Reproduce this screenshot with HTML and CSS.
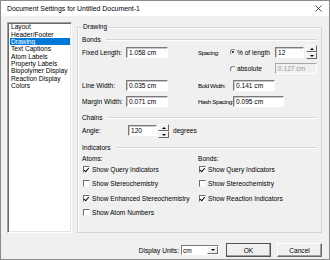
FILE: index.html
```html
<!DOCTYPE html>
<html lang="en">
<head>
  <meta charset="UTF-8" />
  <title>Document Settings</title>
  <link rel="stylesheet" href="styles.css">
</head>
<body>
  <div class="window">
    <div class="titlebar">
      <span>Document Settings for Untitled Document-1</span>
      <svg class="close" width="7" height="7" viewBox="0 0 7 7"><path d="M0.5 0.5L6.5 6.5M6.5 0.5L0.5 6.5" stroke="#222" stroke-width="0.8"/></svg>
    </div>

    <div class="content">
      <div class="main">
        <ul class="listbox">
          <li>Layout</li>
          <li>Header/Footer</li>
          <li class="selected">Drawing</li>
          <li>Text Captions</li>
          <li>Atom Labels</li>
          <li>Property Labels</li>
          <li>Biopolymer Display</li>
          <li>Reaction Display</li>
          <li>Colors</li>
        </ul>

        <fieldset class="group">
          <legend>Drawing</legend>

          <div class="sect">Bonds</div>
          <div class="bonds">
            <span>Fixed Length:</span>
            <div class="field">1.058 cm</div>
            <span></span>
            <span class="lbl2">Spacing:</span>
            <div class="value">
              <span class="radio checked"></span>
              <span class="radio-text">% of length</span>
              <div class="field short">12</div>
              <div class="spinner"><i class="up"></i><i class="down"></i></div>
            </div>

            <span></span><span></span><span></span><span></span>
            <div class="value">
              <span class="radio"></span>
              <span class="radio-text">absolute</span>
              <div class="field disabled">0.127 cm</div>
            </div>

            <span>Line Width:</span>
            <div class="field">0.035 cm</div>
            <span></span>
            <span class="lbl2">Bold Width:</span>
            <div class="value"><div class="field indent">0.141 cm</div></div>

            <span>Margin Width:</span>
            <div class="field">0.071 cm</div>
            <span></span>
            <span class="lbl2">Hash Spacing:</span>
            <div class="value"><div class="field indent wide">0.095 cm</div></div>
          </div>

          <div class="sect chains">Chains</div>
          <div class="angle">
            <span class="angle-label">Angle:</span>
            <div class="field short">120</div>
            <div class="spinner"><i class="up"></i><i class="down"></i></div>
            <span class="unit">degrees</span>
          </div>

          <div class="sect indicators">Indicators</div>
          <div class="checks">
            <div class="col">
              <div class="col-head">Atoms:</div>
              <label class="check"><span class="box checked"></span>Show Query Indicators</label>
              <label class="check"><span class="box"></span>Show Stereochemistry</label>
              <label class="check"><span class="box checked"></span>Show Enhanced Stereochemistry</label>
              <label class="check"><span class="box"></span>Show Atom Numbers</label>
            </div>
            <div class="col">
              <div class="col-head">Bonds:</div>
              <label class="check"><span class="box checked"></span>Show Query Indicators</label>
              <label class="check"><span class="box"></span>Show Stereochemistry</label>
              <label class="check"><span class="box checked"></span>Show Reaction Indicators</label>
            </div>
          </div>
        </fieldset>
      </div>

      <div class="footer">
        <span>Display Units:</span>
        <div class="select"><span>cm</span><i class="drop"></i></div>
        <button class="btn default">OK</button>
        <button class="btn">Cancel</button>
      </div>
    </div>
  </div>
</body>
</html>
```

FILE: styles.css
```css
* {
  box-sizing: border-box;
}

body {
  margin: 0;
  font-family: "Liberation Sans", Arial, sans-serif;
  font-size: 6.6px;
  color: #000;
  background: #f0f0f0;
}

.window {
  width: 330px;
  height: 260px;
  border: 1px solid #8c8c8c;
  background: #f0f0f0;
  display: flex;
  flex-direction: column;
}

.titlebar {
  height: 15px;
  background: #fff;
  display: flex;
  align-items: center;
  justify-content: space-between;
  padding: 0 7px 0 6px;
  font-size: 6.9px;
}

.content {
  padding: 6px 7px 0 6px;
}

.main {
  display: flex;
  height: 211px;
}

/* list of pages */
.listbox {
  list-style: none;
  margin: 0;
  padding: 0.3px 1px 0;
  width: 65px;
  background: #fff;
  border: 1px solid;
  border-color: #a0a0a0 #fff #fff #a0a0a0;
  box-shadow: inset 1px 1px #696969, inset -1px -1px #e3e3e3;
}

.listbox li {
  line-height: 7.35px;
  padding-left: 1px;
  margin-left: 1px;
  white-space: nowrap;
}

.listbox .selected {
  background: #0078d7;
  color: #fff;
}

/* group box */
.group {
  flex: 1;
  margin: 0 0 0 5px;
  padding: 0 4px;
  min-width: 0;
  border: 1px solid #d5d5d5;
  box-shadow: inset 1px 1px #fff;
}

.group legend {
  padding: 0 1px;
  line-height: 10px;
}

.sect {
  display: flex;
  align-items: center;
  gap: 5px;
  height: 8px;
  line-height: 8px;
  margin-top: 4px;
}

.sect::after {
  content: '';
  flex: 1;
  border-top: 1px solid #d5d5d5;
  border-bottom: 1px solid #fff;
}

.sect.chains {
  margin-top: 6px;
}

.sect.indicators {
  margin-top: 7px;
}

.bonds {
  display: grid;
  grid-template-columns: 44px 42px 30px 32px 1fr;
  grid-template-rows: repeat(4, 12px);
  row-gap: 4.5px;
  align-items: center;
  margin-top: 2px;
  white-space: nowrap;
}

.lbl2 {
  font-size: 6.2px;
  letter-spacing: -0.4px;
}

.value {
  display: flex;
  align-items: center;
}

.field {
  height: 11px;
  line-height: 9px;
  padding: 0 2px;
  background: #fff;
  border: 1px solid;
  border-color: #7a7a7a #fff #fff #7a7a7a;
  box-shadow: inset 1px 1px #c8c8c8;
  white-space: nowrap;
  overflow: hidden;
}

.field.short {
  width: 29px;
}

.field.indent {
  width: 42px;
  margin-left: 3px;
}

.field.indent.wide {
  width: 51px;
}

.field.disabled {
  width: 42px;
  background: #f0f0f0;
  color: #9a9a9a;
  border-color: #a8a8a8 #fff #fff #a8a8a8;
  box-shadow: none;
}

.radio {
  width: 6px;
  height: 6px;
  border-radius: 50%;
  background: #fff;
  border: 1px solid;
  border-color: #808080 #e6e6e6 #e6e6e6 #808080;
  position: relative;
}

.radio.checked::after {
  content: '';
  position: absolute;
  left: 1px;
  top: 1px;
  width: 2px;
  height: 2px;
  border-radius: 50%;
  background: #000;
}

.radio-text {
  width: 38px;
  margin-left: 1px;
}

.spinner {
  width: 11px;
  height: 14px;
  margin-left: 2px;
  display: flex;
  flex-direction: column;
}

.spinner i {
  flex: 1;
  background: #f0f0f0;
  border: 1px solid;
  border-color: #fff #696969 #696969 #fff;
  position: relative;
}

.spinner i::after {
  content: '';
  position: absolute;
  left: 2.5px;
  top: 2px;
  border-left: 2px solid transparent;
  border-right: 2px solid transparent;
}

.spinner .up::after {
  border-bottom: 2px solid #000;
}

.spinner .down::after {
  border-top: 2px solid #000;
}

.angle {
  display: flex;
  align-items: center;
  height: 12px;
  margin-top: 3px;
}

.angle-label {
  width: 46px;
}

.angle .spinner {
  margin-left: 1px;
}

.unit {
  margin-left: 4px;
}

.checks {
  display: grid;
  grid-template-columns: 116px 1fr;
  margin-top: 3px;
}

.col-head {
  height: 8px;
  line-height: 8px;
}

.check {
  display: flex;
  align-items: center;
  gap: 2px;
  height: 14.3px;
  padding-left: 1px;
  white-space: nowrap;
}

.box {
  width: 7px;
  height: 7px;
  background: #fff;
  border: 1px solid;
  border-color: #6d6d6d #f4f4f4 #f4f4f4 #6d6d6d;
  position: relative;
}

.box.checked::after {
  content: '';
  position: absolute;
  left: 1.2px;
  top: 0;
  width: 2px;
  height: 3.5px;
  border: solid #000;
  border-width: 0 1.2px 1.2px 0;
  transform: rotate(40deg);
}

/* bottom row */
.footer {
  display: flex;
  align-items: center;
  justify-content: flex-end;
  height: 14px;
  margin-top: 10px;
}

.select {
  width: 38px;
  height: 10px;
  margin: 0 7px 0 2px;
  background: #fff;
  border: 1px solid;
  border-color: #7a7a7a #fff #fff #7a7a7a;
  display: flex;
  align-items: center;
  justify-content: space-between;
  padding-left: 1px;
}

.select .drop {
  width: 11px;
  height: 8px;
  background: #f0f0f0;
  border: 1px solid;
  border-color: #fff #696969 #696969 #fff;
  position: relative;
}

.select .drop::after {
  content: '';
  position: absolute;
  left: 2.5px;
  top: 2px;
  border-left: 2px solid transparent;
  border-right: 2px solid transparent;
  border-top: 2px solid #000;
}

.btn {
  width: 45px;
  height: 14px;
  margin-left: 6px;
  padding: 0;
  font: inherit;
  background: #f0f0f0;
  border: 1px solid;
  border-color: #fff #696969 #696969 #fff;
  box-shadow: inset -1px -1px #a0a0a0;
}

.btn.default {
  margin-left: 0;
  outline: 1px solid #555;
  outline-offset: -1px;
}
```
